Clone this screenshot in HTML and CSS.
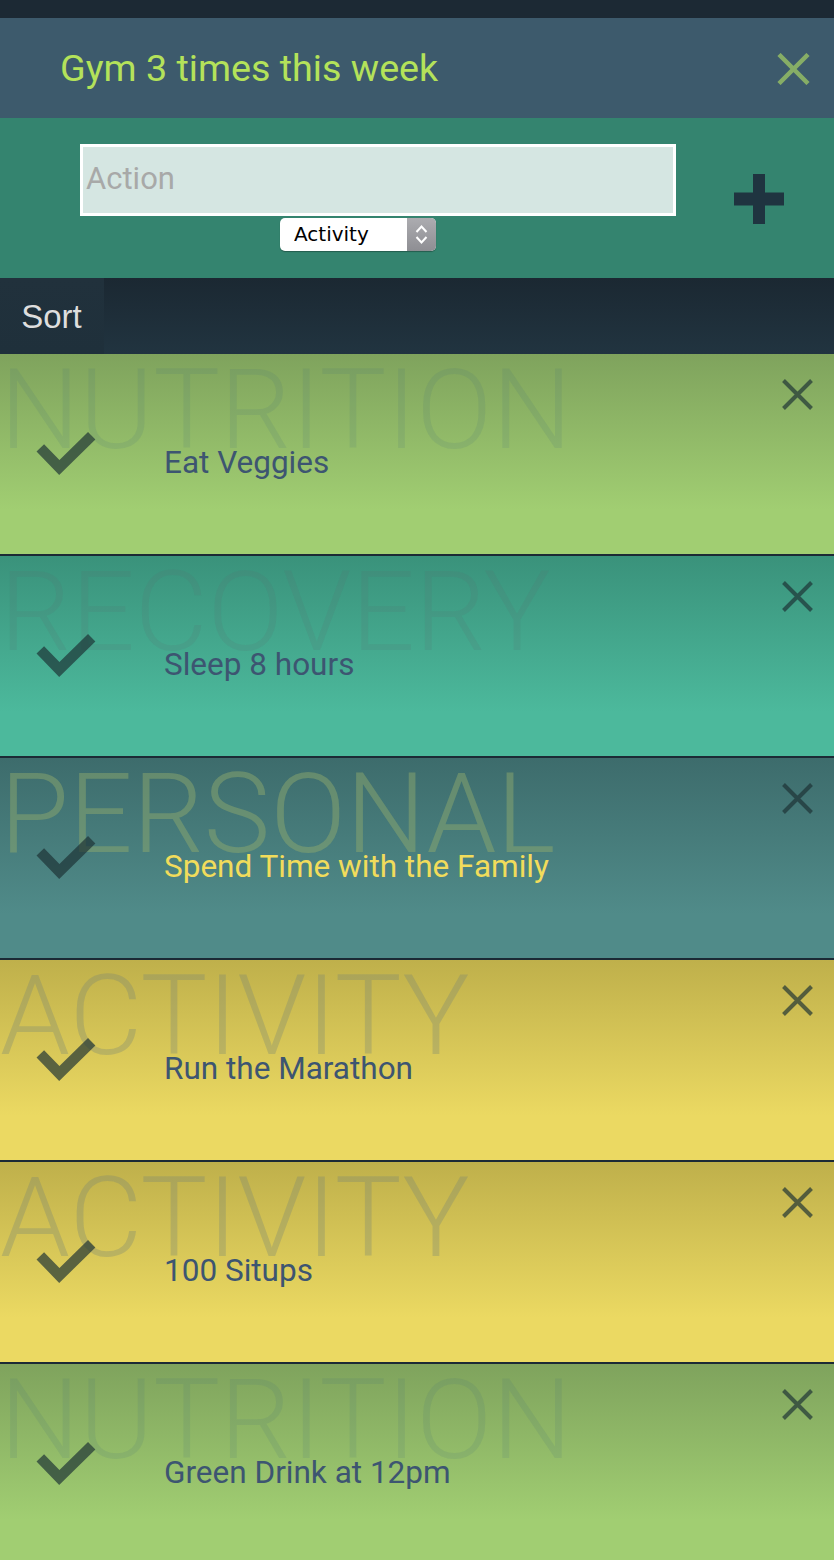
FILE: index.html
```html
<!DOCTYPE html>
<html lang="en">
<head>
<meta charset="utf-8">
<title>Gym 3 times this week</title>
<link rel="stylesheet" href="styles.css">
</head>
<body>
<div class="app">
  <div class="topbar"></div>
  <header class="goal-header">
    <h1 class="goal-title">Gym 3 times this week</h1>
    <button class="goal-close" aria-label="Close">
      <svg viewBox="0 0 33 32" width="33" height="32"><path d="M2 1.5 L31 30.5 M31 1.5 L2 30.5" /></svg>
    </button>
  </header>

  <section class="compose">
    <div class="compose-fields">
      <input class="action-input" type="text" placeholder="Action">
      <div class="select">
        <select class="select-native">
          <option>Activity</option>
          <option>Nutrition</option>
          <option>Recovery</option>
          <option>Personal</option>
        </select>
        <span class="select-arrows">
          <svg viewBox="0 0 29 33" width="29" height="33"><path d="M9.5 14 L14.5 8.5 L19.5 14 M9.5 19 L14.5 24.5 L19.5 19" /></svg>
        </span>
      </div>
    </div>
    <button class="add" aria-label="Add">
      <svg viewBox="0 0 50 50" width="50" height="50"><rect x="0" y="18.5" width="50" height="13"/><rect x="19" y="0" width="12" height="50"/></svg>
    </button>
  </section>

  <nav class="sortbar">
    <button class="sort-btn">Sort</button>
  </nav>

  <main class="list">
    <article class="card nutrition">
      <span class="wm">NUTRITION</span>
      <div class="card-row">
        <svg class="check" viewBox="0 0 60 45" width="60" height="45"><path d="M4.3 15.8 L23.3 35.5 L55.7 3.8"/></svg>
        <span class="card-text">Eat Veggies</span>
      </div>
      <button class="remove" aria-label="Remove"><svg viewBox="0 0 31 31" width="31" height="31"><path d="M1.5 1.5 L29.5 29.5 M29.5 1.5 L1.5 29.5"/></svg></button>
    </article>

    <article class="card recovery">
      <span class="wm">RECOVERY</span>
      <div class="card-row">
        <svg class="check" viewBox="0 0 60 45" width="60" height="45"><path d="M4.3 15.8 L23.3 35.5 L55.7 3.8"/></svg>
        <span class="card-text">Sleep 8 hours</span>
      </div>
      <button class="remove" aria-label="Remove"><svg viewBox="0 0 31 31" width="31" height="31"><path d="M1.5 1.5 L29.5 29.5 M29.5 1.5 L1.5 29.5"/></svg></button>
    </article>

    <article class="card personal">
      <span class="wm">PERSONAL</span>
      <div class="card-row">
        <svg class="check" viewBox="0 0 60 45" width="60" height="45"><path d="M4.3 15.8 L23.3 35.5 L55.7 3.8"/></svg>
        <span class="card-text">Spend Time with the Family</span>
      </div>
      <button class="remove" aria-label="Remove"><svg viewBox="0 0 31 31" width="31" height="31"><path d="M1.5 1.5 L29.5 29.5 M29.5 1.5 L1.5 29.5"/></svg></button>
    </article>

    <article class="card activity">
      <span class="wm">ACTIVITY</span>
      <div class="card-row">
        <svg class="check" viewBox="0 0 60 45" width="60" height="45"><path d="M4.3 15.8 L23.3 35.5 L55.7 3.8"/></svg>
        <span class="card-text">Run the Marathon</span>
      </div>
      <button class="remove" aria-label="Remove"><svg viewBox="0 0 31 31" width="31" height="31"><path d="M1.5 1.5 L29.5 29.5 M29.5 1.5 L1.5 29.5"/></svg></button>
    </article>

    <article class="card activity">
      <span class="wm">ACTIVITY</span>
      <div class="card-row">
        <svg class="check" viewBox="0 0 60 45" width="60" height="45"><path d="M4.3 15.8 L23.3 35.5 L55.7 3.8"/></svg>
        <span class="card-text">100 Situps</span>
      </div>
      <button class="remove" aria-label="Remove"><svg viewBox="0 0 31 31" width="31" height="31"><path d="M1.5 1.5 L29.5 29.5 M29.5 1.5 L1.5 29.5"/></svg></button>
    </article>

    <article class="card nutrition">
      <span class="wm">NUTRITION</span>
      <div class="card-row">
        <svg class="check" viewBox="0 0 60 45" width="60" height="45"><path d="M4.3 15.8 L23.3 35.5 L55.7 3.8"/></svg>
        <span class="card-text">Green Drink at 12pm</span>
      </div>
      <button class="remove" aria-label="Remove"><svg viewBox="0 0 31 31" width="31" height="31"><path d="M1.5 1.5 L29.5 29.5 M29.5 1.5 L1.5 29.5"/></svg></button>
    </article>
  </main>
</div>
</body>
</html>
```

FILE: styles.css
```css
* {
  box-sizing: border-box;
}

html, body {
  margin: 0;
  padding: 0;
  background: #1c2a35;
}

body {
  font-family: Roboto, "Noto Sans", sans-serif;
  width: 834px;
  height: 1560px;
  overflow: hidden;
}

button {
  border: 0;
  padding: 0;
  margin: 0;
  background: none;
  cursor: pointer;
}

.app {
  display: flex;
  flex-direction: column;
}

.topbar {
  height: 18px;
  background: #1c2934;
}

/* header */
.goal-header {
  height: 100px;
  background: #3d5a6c;
  display: flex;
  align-items: center;
  justify-content: space-between;
  padding: 0 24px 0 60px;
}

.goal-title {
  margin: 0;
  font-family: Roboto, sans-serif;
  font-weight: 400;
  font-size: 37.7px;
  color: #b4e25a;
}

.goal-close {
  width: 33px;
  height: 32px;
  display: flex;
  margin-top: 2px;
}

.goal-close svg path {
  stroke: #86ad66;
  stroke-width: 4.5;
  fill: none;
}

/* compose */
.compose {
  height: 160px;
  background: #34846f;
  display: flex;
  align-items: flex-start;
  padding: 26px 0 0 80px;
}

.compose-fields {
  width: 596px;
  display: flex;
  flex-direction: column;
}

.action-input {
  width: 596px;
  height: 72px;
  border: 3px solid #ffffff;
  background: #d5e6e2;
  padding: 0 0 4px 3px;
  font-family: Roboto, sans-serif;
  font-size: 31px;
  color: #333;
  outline: none;
  margin: 0;
}

.action-input::placeholder {
  color: #a8a9a8;
}

.select {
  margin: 2px 0 0 200px;
  width: 156px;
  height: 33px;
  display: flex;
  background: #ffffff;
  border-radius: 5px;
  overflow: hidden;
  box-shadow: 0 1px 1px rgba(0, 0, 0, 0.3);
}

.select-native {
  flex: 1;
  min-width: 0;
  appearance: none;
  -webkit-appearance: none;
  border: 0;
  background: transparent;
  font-family: "DejaVu Sans", sans-serif;
  font-size: 20px;
  color: #000;
  padding: 0 0 1px 14px;
  margin: 0;
  outline: none;
}

.select-arrows {
  width: 29px;
  display: flex;
  background: linear-gradient(#acacb0, #8e8e93);
}

.select-arrows svg path {
  stroke: #ffffff;
  stroke-width: 2;
  fill: none;
}

.add {
  margin: 30px 0 0 58px;
  width: 50px;
  height: 50px;
  display: flex;
}

.add svg rect {
  fill: #1f3440;
}

/* sort bar */
.sortbar {
  height: 76px;
  background: linear-gradient(#1b2832, #213440);
  display: flex;
}

.sort-btn {
  width: 104px;
  height: 76px;
  background: linear-gradient(#21313c, #1f303b);
  font-family: "Liberation Sans", Arial, sans-serif;
  font-size: 33px;
  color: #dedede;
  display: flex;
  align-items: center;
  justify-content: center;
  padding: 2px 1px 0 0;
}

/* cards */
.list {
  display: flex;
  flex-direction: column;
}

.card {
  position: relative;
  height: 202px;
  flex: none;
  border-bottom: 2px solid #1c2a35;
  display: flex;
  align-items: flex-start;
  padding: 25px 21px 0 36px;
  overflow: hidden;
}

.wm {
  position: absolute;
  left: 0;
  top: 0;
  font-family: Roboto, sans-serif;
  font-weight: 300;
  font-size: 112px;
  line-height: 1;
  white-space: nowrap;
  pointer-events: none;
}

.card-row {
  position: relative;
  display: flex;
  align-items: flex-start;
  margin-top: 53px;
}

.check {
  flex: none;
}

.check path {
  fill: none;
  stroke: rgba(28, 48, 52, 0.68);
  stroke-width: 10.5;
  stroke-linecap: butt;
  stroke-linejoin: miter;
}

.card-text {
  margin: 13px 0 0 68px;
  font-family: Roboto, sans-serif;
  font-size: 31.5px;
  line-height: 36px;
  color: #3d5571;
}

.remove {
  position: relative;
  margin-left: auto;
  width: 31px;
  height: 31px;
  display: flex;
}

.remove path {
  stroke: rgba(28, 48, 52, 0.68);
  stroke-width: 4;
  fill: none;
}

.nutrition {
  background: linear-gradient(#7fa35d 0%, #a1ce72 78%, #a1ce72 100%);
}
.nutrition .wm {
  color: rgba(70, 110, 120, 0.14);
}

.recovery {
  background: linear-gradient(#3a927b 0%, #4cb99c 78%, #4cb99c 100%);
}
.recovery .wm {
  color: rgba(90, 110, 110, 0.16);
}

.personal {
  background: linear-gradient(#3d6c6c 0%, #508b89 78%, #508b89 100%);
}
.personal .wm {
  color: rgba(140, 168, 110, 0.5);
}
.personal .card-text {
  color: #f1dc5b;
}

.activity {
  background: linear-gradient(#bfb04b 0%, #ebd962 78%, #ebd962 100%);
}
.activity .wm {
  color: rgba(120, 135, 115, 0.33);
}
```
